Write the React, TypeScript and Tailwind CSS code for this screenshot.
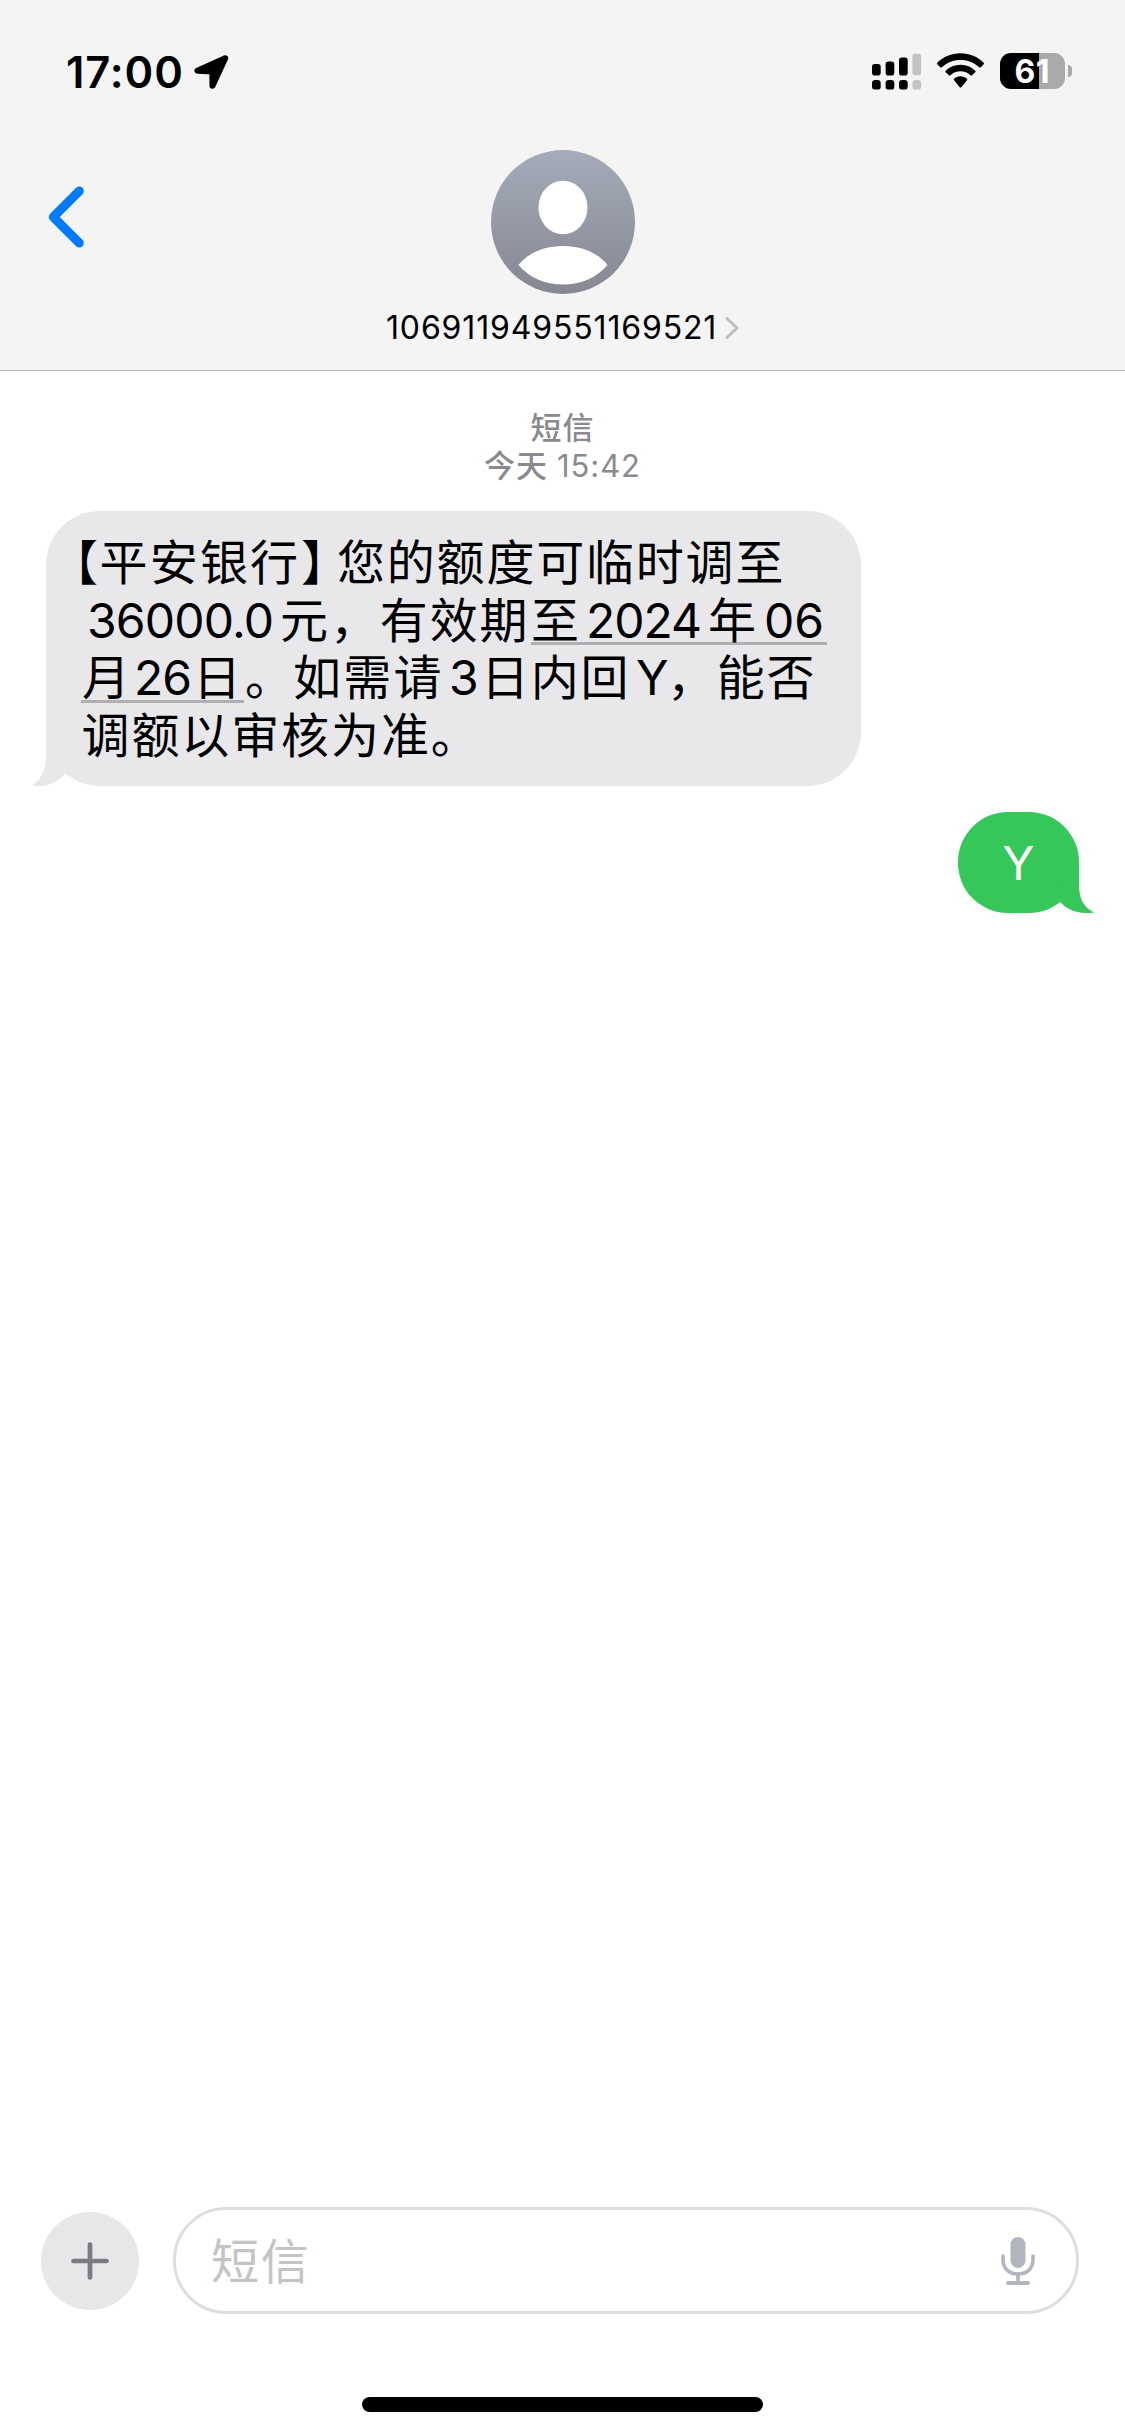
import React from "react";

type Segment = { text: string; className: string; underlined?: boolean };

const LINES: { indent: string; segments: Segment[] }[] = [
  {
    indent: "pl-[4px]",
    segments: [
      { text: "【", className: "w-[49.5px]" },
      { text: "平安银行", className: "w-[201.5px] tracking-[2.2px]" },
      { text: "】", className: "w-[36px] [font-feature-settings:'halt']" },
      { text: "您的额度可临时调至", className: "tracking-[1.8px]" },
    ],
  },
  {
    indent: "pl-[41px]",
    segments: [
      { text: "36000.0", className: "w-[193px] tracking-[-0.8px]" },
      { text: "元，有效期", className: "w-[251px] tracking-[1.9px]" },
      { text: "至", className: "w-[55px]", underlined: true },
      { text: "2024", className: "w-[122px] tracking-[-1px]", underlined: true },
      { text: "年", className: "w-[56px]", underlined: true },
      { text: "06", className: "w-[63px] tracking-[0px]", underlined: true },
    ],
  },
  {
    indent: "pl-[35px]",
    segments: [
      { text: "月", className: "w-[53px] pl-px", underlined: true },
      { text: "26", className: "w-[59px] tracking-[-1px]", underlined: true },
      { text: "日", className: "w-[51px]", underlined: true },
      { text: "。", className: "w-[49px] pl-px" },
      { text: "如需请", className: "w-[156px] tracking-[2.2px]" },
      { text: "3", className: "w-[32px]" },
      { text: "日内回", className: "w-[155px] tracking-[1.7px]" },
      { text: "Y", className: "w-[31px]" },
      { text: "，能否", className: "tracking-[1.7px]" },
    ],
  },
  {
    indent: "pl-[35.500px]",
    segments: [{ text: "调额以审核为准。", className: "tracking-[1.9px]" }],
  },
];

function SignalIcon() {
  return (
    <svg width="50" height="38" viewBox="0 0 50 38">
      <rect x="0" y="11" width="8.7" height="11.500" rx="2.8" />
      <rect x="13.6" y="8.5" width="8.7" height="14" rx="2.8" />
      <rect x="27" y="4.5" width="8.7" height="18" rx="2.8" />
      <rect x="40.4" y="0.8" width="8.7" height="21.500" rx="2.8" fill="#c3c3c3" />
      <rect x="0" y="27" width="8.7" height="9.6" rx="3.2" />
      <rect x="13.6" y="27" width="8.7" height="9.6" rx="3.2" />
      <rect x="27" y="27" width="8.7" height="9.6" rx="3.2" />
      <rect x="40.4" y="27" width="8.7" height="9.6" rx="3.2" fill="#c3c3c3" />
    </svg>
  );
}

function WifiIcon() {
  return (
    <svg width="48" height="36" viewBox="0 0 48 36">
      <path d="M23.5 0.2C32.5 0.2 40.800 3.700 46.600 9.700Q47.400 10.500 46.700 11.300L43.800 14.200Q43 14.900 42.200 14.200C37.300 9.500 30.800 6.900 23.500 6.900S9.700 9.500 4.800 14.200Q4 14.900 3.200 14.200L0.300 11.300Q-0.400 10.500 0.400 9.700C6.200 3.700 14.500 0.200 23.500 0.200Z" />
      <path d="M23.500 11.700C29.300 11.700 34.500 13.900 38.300 17.700Q39 18.500 38.300 19.200L35.100 22.300Q34.300 23 33.500 22.300C30.900 19.800 27.400 18.300 23.500 18.300S16.100 19.800 13.500 22.300Q12.700 23 11.900 22.300L8.700 19.200Q8 18.500 8.700 17.700C12.500 13.900 17.700 11.700 23.500 11.700Z" />
      <path d="M23.500 23.200C26 23.200 28.300 24.200 30 25.800Q30.700 26.500 30 27.300L24.300 34.200Q23.500 34.900 22.700 34.200L17 27.300Q16.300 26.500 17 25.800C18.700 24.200 21 23.200 23.500 23.200Z" />
    </svg>
  );
}

function StatusBar() {
  return (
    <div className="flex h-[144px] items-start justify-between pl-[66px] pr-[53px]">
      <div className="flex items-start pt-[44px]">
        <span className="w-[128px] text-[43.500px] font-semibold leading-[56px] tracking-[0.9px]">17:00</span>
        <svg className="mt-[10px]" width="36" height="36" viewBox="0 0 36 36">
          <path
            d="M31.200 4.200L3.500 16.800L18.300 17.600L18.500 31.800Z"
            stroke="#000"
            strokeWidth="6"
            strokeLinejoin="round"
          />
        </svg>
      </div>
      <div className="flex items-start pt-[53px]">
        <SignalIcon />
        <div className="ml-[15px]">
          <WifiIcon />
        </div>
        <div className="ml-[15px] flex h-[36px] w-[65.500px] items-center justify-center rounded-[11px] bg-[linear-gradient(90deg,#000_60.500%,#a9a9a9_60.500%)]">
          <span className="pt-[2px] text-[32px] font-bold leading-[40px] tracking-[0.5px] text-white">61</span>
        </div>
        <div className="ml-[3px] mt-[12px] h-[12px] w-[4px] rounded-r-[4px] bg-[#a9a9a9]" />
      </div>
    </div>
  );
}

function Header() {
  return (
    <header className="h-[371px] border-b border-[#b4b4b6] bg-[#f4f4f4]">
      <StatusBar />
      <div className="grid grid-cols-[1fr_auto_1fr]">
        <svg className="ml-[44px] mt-[38px]" width="48" height="70" viewBox="0 0 48 70" fill="none">
          <path
            d="M35.300 9L9.300 35L35.300 61"
            stroke="#007aff"
            strokeWidth="9"
            strokeLinecap="round"
            strokeLinejoin="round"
          />
        </svg>
        <div className="flex flex-col items-center pt-[6px]">
          <svg width="144" height="144" viewBox="0 0 144 144">
            <defs>
              <linearGradient id="avatar" x1="0" y1="0" x2="0" y2="1">
                <stop offset="0" stopColor="#a5abb9" />
                <stop offset="1" stopColor="#858892" />
              </linearGradient>
            </defs>
            <circle cx="72" cy="72" r="72" fill="url(#avatar)" />
            <ellipse cx="72" cy="57.500" rx="24.500" ry="26.700" fill="#fff" />
            <path d="M27.500 115C37 103 53 96 72 96S107 103 116.500 115C106 127.500 90 134.500 72 134.500S38 127.500 27.500 115Z" fill="#fff" />
          </svg>
          <div className="mt-[14px] flex items-center">
            <span className="w-[339px] text-[32px] leading-[40px] tracking-[0.85px] whitespace-nowrap">106911949551169521</span>
            <svg width="14" height="24" viewBox="0 0 14 24" fill="none">
              <path d="M2 2.500L12 12L2 21.500" stroke="#bdbdc1" strokeWidth="2.800" strokeLinecap="round" />
            </svg>
          </div>
        </div>
      </div>
    </header>
  );
}

function IncomingBubble() {
  return (
    <div className="relative ml-[46px] mt-[27px] h-[275px] w-[815px] rounded-[54px] bg-[#e8e8ea] pt-[23px]">
      <svg className="absolute bottom-0 left-[-14px]" width="36" height="50" viewBox="0 0 36 50">
        <path d="M14 0V19C14 33 10 43 0 49.300C10 51.500 23 49 32.500 38.500L34 10Z" fill="#e8e8ea" />
      </svg>
      <div className="relative text-[48px] leading-[57.600px] text-black">
        {LINES.map((line, i) => (
          <div key={i} className={`flex h-[57.600px] items-baseline ${line.indent}`}>
            {line.segments.map((s, j) => (
              <span
                key={j}
                className={`h-[57.600px] shrink-0 whitespace-nowrap ${s.className} ${
                  s.underlined ? "bg-[linear-gradient(#b0b0b3,#b0b0b3)] bg-[length:100%_3px] bg-[position:0_50.500px] bg-no-repeat" : ""
                }`}
              >
                {s.text}
              </span>
            ))}
          </div>
        ))}
      </div>
    </div>
  );
}

function OutgoingBubble() {
  return (
    <div className="relative ml-auto mr-[46px] mt-[26px] flex h-[101px] w-[121px] items-center justify-center rounded-[50px] bg-[#35c759]">
      <svg className="absolute bottom-0 right-[-15px]" width="36" height="50" viewBox="0 0 36 50">
        <path d="M21 0V21C21 35 25 44 36 49.400C24 51.500 10 48.500 2.500 39L1 10Z" fill="#35c759" />
      </svg>
      <span className="relative text-[47px] leading-[57.600px] text-white">Y</span>
    </div>
  );
}

function Composer() {
  return (
    <footer className="flex h-[190px] items-start pl-[40.500px] pr-[46px]">
      <button className="mt-[5px] flex size-[98px] items-center justify-center rounded-full bg-[#e6e7e9]">
        <svg width="40" height="40" viewBox="0 0 40 40" stroke="#7b7b83" strokeWidth="4.700" strokeLinecap="round">
          <path d="M20 3.500V36.500M3.500 20H36.500" />
        </svg>
      </button>
      <div className="ml-[34.500px] flex h-[107px] flex-1 items-center justify-between rounded-[53px] border-[3px] border-[#dedede] pl-[35px] pr-[40px]">
        <span className="pt-[3px] text-[48px] leading-[58px] tracking-[1.8px] text-[#c4c4c6]">短信</span>
        <svg width="36" height="52" viewBox="0 0 36 52" fill="none" stroke="#b0b5be" strokeLinecap="round">
          <rect x="10.500" y="2" width="15" height="31" rx="7.500" fill="#b0b5be" stroke="none" />
          <path d="M3 21V24.500C3 33.500 9 39 18 39S33 33.500 33 24.500V21" strokeWidth="3.600" />
          <path d="M18 39V47" strokeWidth="3.600" />
          <path d="M8 48H28" strokeWidth="4" />
        </svg>
      </div>
    </footer>
  );
}

export default function App() {
  return (
    <div
      lang="zh-CN"
      className="flex h-[2435px] w-[1125px] flex-col overflow-hidden bg-white font-['Inter','Noto_Sans_CJK_SC',sans-serif] text-black"
    >
      <Header />
      <main className="flex-1">
        <div className="flex flex-col items-center pt-[38px] text-[31px] leading-[37.500px] text-[#8a8a8e]">
          <span className="font-medium tracking-[1px]">短信</span>
          <div className="flex">
            <span className="w-[73px] font-medium tracking-[1px]">今天</span>
            <span className="tracking-[0.9px]">15:42</span>
          </div>
        </div>
        <IncomingBubble />
        <OutgoingBubble />
      </main>
      <Composer />
      <div className="mx-auto mb-[23px] h-[15px] w-[401px] shrink-0 rounded-full bg-black" />
    </div>
  );
}
